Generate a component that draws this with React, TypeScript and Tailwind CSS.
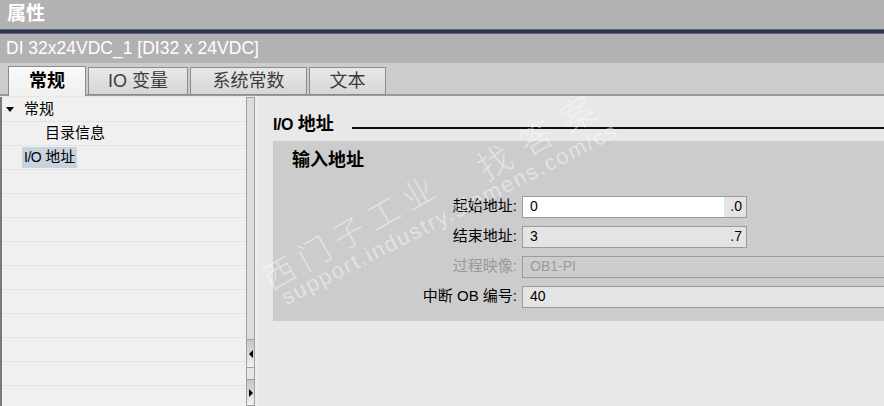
import React from 'react';

const cjk = "font-['Liberation_Sans','Noto_Sans_CJK_SC',sans-serif]";

const tabs = [
  { label: '常规', w: 'w-[78px]', active: true },
  { label: 'IO 变量', w: 'w-[100px]' },
  { label: '系统常数', w: 'w-[117px]' },
  { label: '文本', w: 'w-[77px]' },
];

function Tabs() {
  return (
    <div className="h-[33px] shrink-0 bg-[#cccccc] relative flex items-end pl-2 gap-[2px]">
      <div className="absolute left-0 right-0 bottom-0 h-[2px] bg-[#9a9a9a]" />
      {tabs.map((t) =>
        t.active ? (
          <div
            key={t.label}
            className={`${t.w} h-[30px] relative z-10 flex items-center justify-center bg-gradient-to-b from-[#fafafa] to-[#f0f0f0] border border-b-0 border-[#8c8c8c] text-[18px] font-bold text-black`}
          >
            {t.label}
          </div>
        ) : (
          <div
            key={t.label}
            className={`${t.w} h-[28px] mb-[1px] relative z-10 flex items-center justify-center bg-gradient-to-b from-[#e8e8e8] to-[#d6d6d6] border border-[#8c8c8c] text-[18px] text-[#3c3c3c]`}
          >
            {t.label}
          </div>
        )
      )}
    </div>
  );
}

function Tree() {
  const rows = Array.from({ length: 13 });
  return (
    <div className="w-[246px] h-full bg-[#f0f0f0] border-l-2 border-[#7a7a7a] flex flex-col overflow-hidden pt-[1px]">
      {rows.map((_, i) => (
        <div key={i} className="h-[24px] shrink-0 border-b border-[#e3e3e3] flex items-center text-[15px] text-black">
          {i === 0 && (
            <>
              <span className="ml-[4px] w-0 h-0 border-l-[4px] border-r-[4px] border-t-[5px] border-l-transparent border-r-transparent border-t-black" />
              <span className="ml-[10px]">常规</span>
            </>
          )}
          {i === 1 && <span className="ml-[43px]">目录信息</span>}
          {i === 2 && (
            <span className="ml-[20px] px-[2px] h-[21px] flex items-center bg-[#c9d3df]">
              <span className="text-[14px] tracking-[-0.5px]">I/O</span>
              <span className="ml-[4px]">地址</span>
            </span>
          )}
        </div>
      ))}
    </div>
  );
}

function Scrollbar() {
  return (
    <div className="w-[12px] h-full flex">
      <div className="w-[9px] h-full border border-[#a0a0a0] bg-[#dcdcdc] flex flex-col">
        <div className="flex-1" />
        <div className="h-[28px] bg-gradient-to-b from-[#c4c4c4] to-[#f2f2f2] border-t border-[#a0a0a0] flex items-center justify-center">
          <span className="w-0 h-0 border-t-[4px] border-b-[4px] border-r-[4px] border-t-transparent border-b-transparent border-r-black" />
        </div>
        <div className="h-[12px] border-t border-[#a0a0a0] bg-[#e6e6e6]" />
        <div className="h-[26px] bg-gradient-to-b from-[#c4c4c4] to-[#f2f2f2] border-t border-[#a0a0a0] flex items-center justify-center">
          <span className="w-0 h-0 border-t-[4px] border-b-[4px] border-l-[4px] border-t-transparent border-b-transparent border-l-black" />
        </div>
      </div>
      <div className="w-[3px] h-full bg-[#ececec]" />
    </div>
  );
}

function Field({
  label,
  value,
  suffix,
  disabled,
  white,
  short,
}: {
  label: React.ReactNode;
  value: string;
  suffix?: string;
  disabled?: boolean;
  white?: boolean;
  short?: boolean;
}) {
  return (
    <div className="flex items-center h-[21px]">
      <div className={`w-[249px] text-right pr-[5px] text-[15px] ${disabled ? 'text-[#9a9a9a]' : 'text-black'}`}>
        {label}
      </div>
      <div
        className={`h-[22px] flex items-center border border-[#9b9b9b] ${short ? 'w-[225px]' : 'flex-1 border-r-0'} ${
          disabled ? 'bg-[#cdcdcd]' : white ? 'bg-white' : 'bg-[#e4e4e4]'
        }`}
      >
        <span className={`flex-1 pl-[7px] text-[14px] ${disabled ? 'text-[#9a9a9a]' : 'text-black'}`}>{value}</span>
        {suffix && (
          <span className="w-[22px] h-full flex items-center justify-end pr-[4px] bg-[#e4e4e4] text-[14px] text-black">
            {suffix}
          </span>
        )}
      </div>
    </div>
  );
}

// faint diagonal watermark lying over the panel
function Watermark() {
  return (
    <div className="absolute inset-0 pointer-events-none overflow-hidden text-white/45 leading-none whitespace-nowrap">
      <div className="absolute left-[266px] top-[170px] origin-left -rotate-[30deg] text-[32px] tracking-[8px] font-light">
        西门子工业
      </div>
      <div className="absolute left-[283px] top-[192px] origin-left -rotate-[27deg] text-[22px] tracking-[1.8px]">
        support.industry.siemens.com/cs
      </div>
      <div className="absolute left-[480px] top-[58px] origin-left -rotate-[30deg] text-[34px] tracking-[14px] font-light">
        找答案
      </div>
    </div>
  );
}

function Detail() {
  return (
    <div className="flex-1 h-full bg-[#e8e8e8] pl-[15px] pt-[16px]">
      <div className="flex items-center h-[22px]">
        <span className="text-[18px] font-bold text-black">
          <span className="text-[16px] tracking-[-0.5px]">I/O</span> 地址
        </span>
        <div className="ml-[18px] flex-1 h-[2px] bg-[#111] mt-[8px]" />
      </div>
      <div className="mt-[6px] h-[180px] bg-[#cccccc] pt-[6px]">
        <div className="pl-[19px] text-[18px] font-bold text-black">输入地址</div>
        <div className="mt-[22px] flex flex-col gap-[9px]">
          <Field label="起始地址:" value="0" suffix=".0" white short />
          <Field label="结束地址:" value="3" suffix=".7" short />
          <Field label="过程映像:" value="OB1-PI" disabled />
          <Field label="中断 OB 编号:" value="40" />
        </div>
      </div>
    </div>
  );
}

export default function App() {
  return (
    <div className={`w-[884px] h-[406px] overflow-hidden flex flex-col bg-[#e8e8e8] ${cjk}`}>
      <div className="h-[29px] shrink-0 bg-[#b2b2b2] flex items-center pl-[7px] text-[19px] font-bold text-white">属性</div>
      <div className="h-[5px] shrink-0 bg-[#2d3650] border-y border-[#5c6378]" />
      <div className="h-[29px] shrink-0 bg-[#b2b2b2] flex items-center pl-[6px] text-[17.5px] text-white">
        DI 32x24VDC_1 [DI32 x 24VDC]
      </div>
      <Tabs />
      <div className="flex-1 min-h-0 flex relative pt-[1px]">
        <Tree />
        <Scrollbar />
        <Detail />
        <Watermark />
      </div>
    </div>
  );
}
